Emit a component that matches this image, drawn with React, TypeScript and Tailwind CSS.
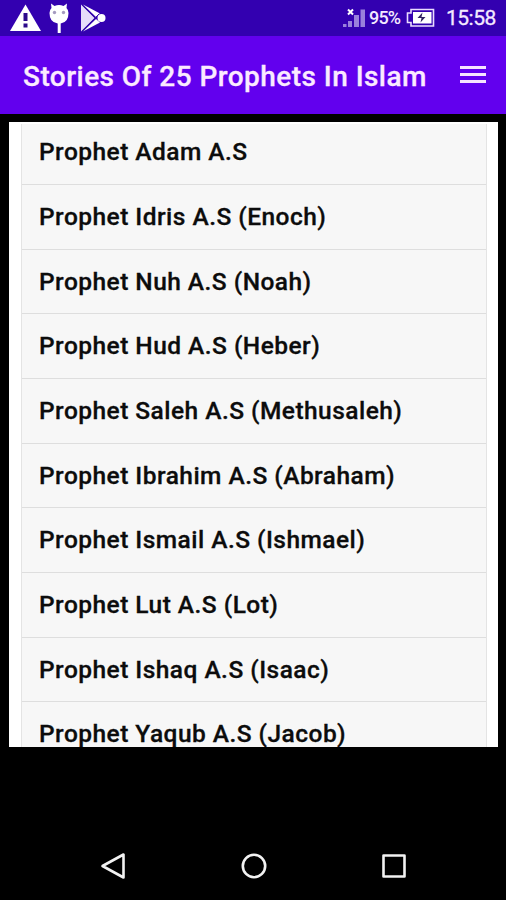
import React from 'react';

const stories = [
    'Prophet Adam A.S',
    'Prophet Idris A.S (Enoch)',
    'Prophet Nuh A.S (Noah)',
    'Prophet Hud A.S (Heber)',
    'Prophet Saleh A.S (Methusaleh)',
    'Prophet Ibrahim A.S (Abraham)',
    'Prophet Ismail A.S (Ishmael)',
    'Prophet Lut A.S (Lot)',
    'Prophet Ishaq A.S (Isaac)',
    'Prophet Yaqub A.S (Jacob)',
];

const StatusBar = () => (
    <div className="flex h-9 shrink-0 items-center justify-between bg-[#3300b0] pl-2 pr-[10px] text-[#f3e9ff]">
        <div className="flex items-center">
            {/* Warning */}
            <svg width="34" height="36" viewBox="0 0 34 36">
                <path d="M17.5 4.5 L33 31 H2 Z" fill="#fff" />
                <path d="M15.5 13h4v8h-4zM15.5 23.500h4v4h-4z" fill="#2c0a8c" />
            </svg>
            {/* Android head on a stick */}
            <svg width="22" height="36" viewBox="0 0 22 36" className="ml-[6px]">
                <path d="M3 3.500 L6.500 6 Q11 4 15.500 6 L19 3.500 L18.500 8 Q20.500 10 20.500 13 Q20.500 22.500 12.700 23.500 V33 H9.700 V23.500 Q1.500 22.500 1.500 13 Q1.500 10 3.500 8 Z" fill="#fff" />
                <circle cx="6.500" cy="12.500" r="1.700" fill="#a59bc0" />
                <circle cx="15.500" cy="12.500" r="1.700" fill="#a59bc0" />
            </svg>
            {/* Play Store */}
            <svg width="28" height="36" viewBox="0 0 28 36" className="ml-[9px]">
                <path d="M2 4.500 L15.500 18 L2 31.500 Z" fill="#e6dcfa" />
                <path d="M4 4.500 L21 13.500 L17 17 Z" fill="#fff" />
                <path d="M4 31.500 L21 22.500 L17 19 Z" fill="#fff" />
                <circle cx="22.500" cy="18" r="4" fill="#fff" />
                <path d="M3 5 L16 18 L3 31 M20.500 13.500 L12 22" fill="none" stroke="#3a14a8" strokeWidth="1" />
            </svg>
        </div>

        <div className="flex items-center">
            <svg width="23" height="36" viewBox="0 0 23 36">
                <path d="M0 24h3.500v3H0zM5 21h4v6H5zM11 15h5v12h-5zM17.500 9.500h4.500V27h-4.500z" fill="#9a80dc" />
                <path d="M5 9.500l5 5M10 9.500l-5 5" stroke="#fff" strokeWidth="2" />
            </svg>
            <span className="ml-[3px] w-[34px] whitespace-nowrap text-[18px] font-medium leading-none tracking-[-0.8px]">95%</span>
            <svg width="29" height="36" viewBox="0 0 29 36" className="ml-[3px]">
                <path d="M5 9.500H27.500V26H5V22.500H1.500V13H5Z" fill="none" stroke="#eadcff" strokeWidth="1.600" />
                <path d="M7 12h18.500v11.500H7z" fill="#fff" />
                <path d="M16.500 12.500l-5 5.500h4l-1 4.500 5-5.500h-4z" fill="#302060" />
            </svg>
            <span className="ml-[11px] w-[50px] whitespace-nowrap text-[21px] leading-none tracking-[-0.500px] [-webkit-text-stroke:0.3px_#f3e9ff]">15:58</span>
        </div>
    </div>
);

const Header = () => (
    <header className="flex h-[78px] shrink-0 items-center justify-between bg-[#6200ee] pl-[23px] pr-5 text-[#fbeaff]">
        <h1 className="whitespace-nowrap pt-[3px] text-[28px] font-medium leading-8 tracking-[0.450px] [-webkit-text-stroke:0.3px_#fbeaff]">Stories Of 25 Prophets In Islam</h1>
        <button className="mt-[-2px] flex w-[26px] flex-col gap-1" aria-label="Menu">
            <span className="h-[3px] w-full bg-[#f6e2ff]" />
            <span className="h-[3px] w-full bg-[#f6e2ff]" />
            <span className="h-[3px] w-full bg-[#f6e2ff]" />
        </button>
    </header>
);

const NavBar = () => (
    <nav className="flex h-[68px] shrink-0 items-center justify-between pl-[100px] pr-[99px]">
        <svg width="26" height="28" viewBox="0 0 26 28" fill="none" stroke="#f2f2f2" strokeWidth="2.600" strokeLinejoin="round">
            <path d="M23.500 2.500v23L2.500 14z" />
        </svg>
        <svg width="26" height="28" viewBox="0 0 26 28" fill="none" stroke="#f2f2f2" strokeWidth="2.600">
            <circle cx="13" cy="14" r="11.200" />
        </svg>
        <svg width="26" height="28" viewBox="0 0 26 28" fill="none" stroke="#f2f2f2" strokeWidth="2.600" strokeLinejoin="round">
            <rect x="2.500" y="3.500" width="21" height="21" />
        </svg>
    </nav>
);

export default function App() {
    return (
        <div className="flex h-[900px] w-[506px] flex-col overflow-hidden bg-black font-['Roboto',sans-serif]">
            <StatusBar />
            <Header />

            <main className="ml-[9px] mr-2 mt-2 h-[625px] shrink-0 overflow-hidden bg-white pl-3 pr-[11px] pt-[2px]">
                <ul className="border-x border-[#e4e4e4] bg-[#f7f7f7]">
                    {stories.map((story) => (
                        <li
                            key={story}
                            className="flex h-[64.67px] items-center whitespace-nowrap border-b border-[#dedede] pl-[17px] pt-px text-[24.5px] font-medium tracking-[0.460px] text-[#0c0c0c] [-webkit-text-stroke:0.3px_#0c0c0c] first:h-[61px] first:pb-1"
                        >
                            {story}
                        </li>
                    ))}
                </ul>
            </main>

            <div className="flex-1" />
            <NavBar />
        </div>
    );
}
